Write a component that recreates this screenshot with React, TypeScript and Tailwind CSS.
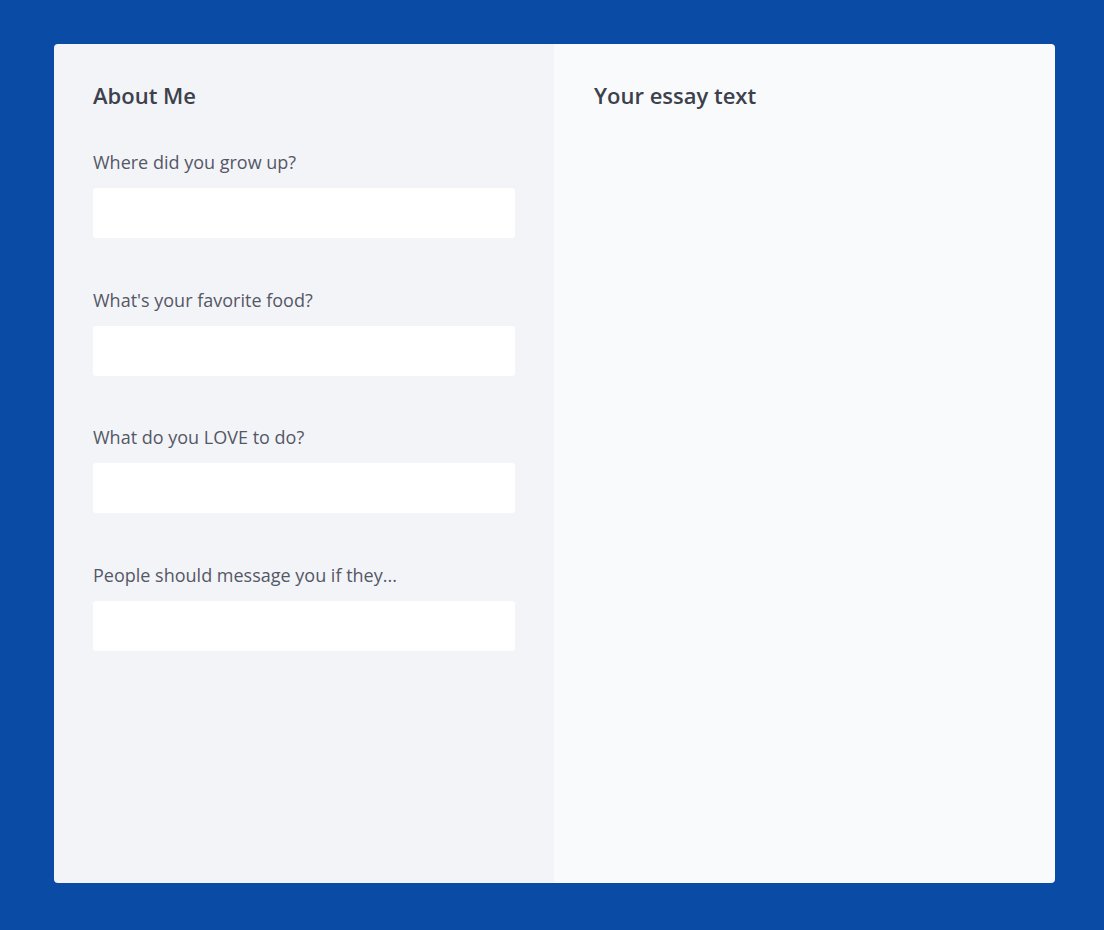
import React from 'react';

const questions = [
  'Where did you grow up?',
  "What's your favorite food?",
  'What do you LOVE to do?',
  'People should message you if they...',
];

export default function App() {
  return (
    <div
      className="min-h-[930px] bg-[#0a4ba5] pt-[44px] pl-[54px]"
      style={{ fontFamily: '"Open Sans", "Noto Sans", sans-serif' }}
    >
      <div className="flex h-[839px] w-[1001px] overflow-hidden rounded-[4px]">
        <div className="w-[500px] bg-[#f3f4f8] px-[39px] pt-[36px]">
          <h2 className="text-[22px] leading-[30px] font-semibold text-[#3d414c]">About Me</h2>
          <div className="mt-[39px] flex flex-col gap-[48.5px]">
            {questions.map((q) => (
              <div key={q}>
                <label className="block text-[18px] leading-[26px] text-[#535866]">{q}</label>
                <input
                  type="text"
                  className="mt-[13px] block h-[50px] w-full rounded-[3px] bg-white outline-none"
                />
              </div>
            ))}
          </div>
        </div>
        <div className="flex-1 bg-[#f9fafc] px-[40px] pt-[36px]">
          <h2 className="text-[22px] leading-[30px] font-semibold text-[#3d414c]">Your essay text</h2>
        </div>
      </div>
    </div>
  );
}
